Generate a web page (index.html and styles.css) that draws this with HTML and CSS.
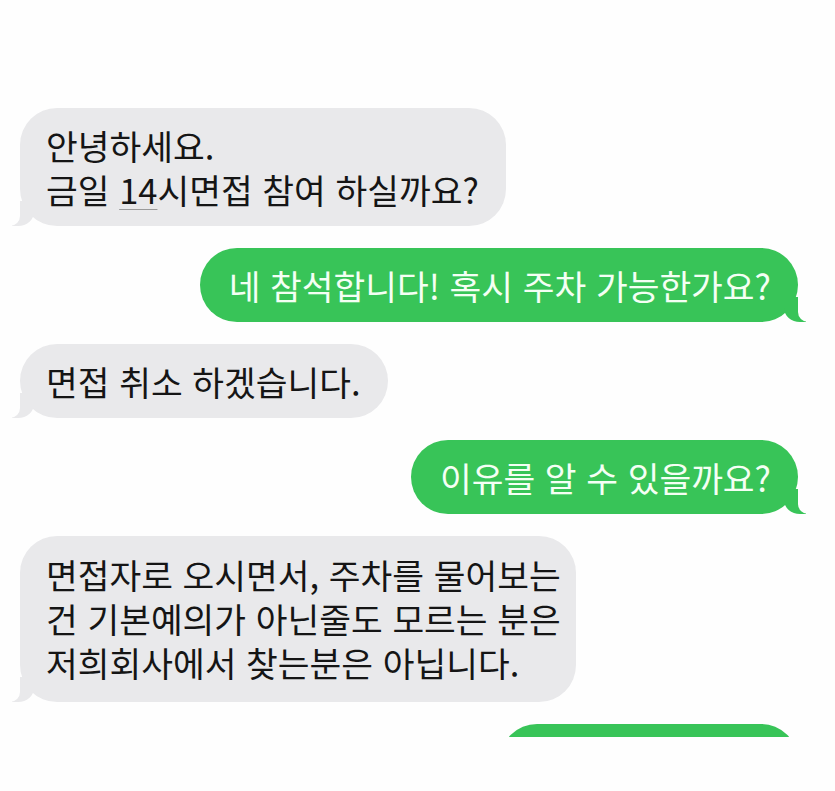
FILE: index.html
```html
<!DOCTYPE html>
<html lang="ko">
<head>
  <meta charset="UTF-8" />
  <meta name="viewport" content="width=device-width, initial-scale=1" />
  <title>메시지</title>
  <link rel="stylesheet" href="styles.css">
</head>
<body>
  <div class="thread">
    <div class="msg in">안녕하세요.<br/>금일 <span class="detect">14</span>시면접 참여 하실까요?</div>
    <div class="msg out">네 참석합니다! 혹시 주차 가능한가요?</div>
    <div class="msg in">면접 취소 하겠습니다.</div>
    <div class="msg out">이유를 알 수 있을까요?</div>
    <div class="msg in wide">면접자로 오시면서, 주차를 물어보는 건 기본예의가 아닌줄도 모르는 분은 저희회사에서 찾는분은 아닙니다.</div>
    <div class="msg out pending"></div>
  </div>
</body>
</html>
```

FILE: styles.css
```css
body {
  margin: 0;
  background: #fefefe;
  font-family: "Noto Sans CJK KR", "Noto Sans", sans-serif;
}
.thread {
  display: flex;
  flex-direction: column;
  gap: 22px;
  height: 629px;
  padding: 108px 37px 0 20px;
  overflow: hidden;
}
.msg {
  position: relative;
  max-width: 620px;
  padding: 15px 27px 15px 26px;
  border-radius: 37px;
  font-size: 34.5px;
  line-height: 44px;
  box-sizing: border-box;
}
.msg.in {
  align-self: flex-start;
  background: #e9e9eb;
  color: #151515;
}
.msg.out {
  align-self: flex-end;
  background: #38c458;
  color: #f4fff4;
}
.msg.out:not(.pending) {
  padding-left: 29px;
}
.msg.wide {
  max-width: 556px;
  padding: 16px 10px 18px 26px;
}
.msg.pending {
  width: 298px;
  height: 74px;
  flex-shrink: 0;
}
.detect {
  text-decoration: underline;
  text-decoration-color: #9a9a9a;
  text-decoration-thickness: 1px;
  text-underline-offset: 5px;
}

/* bubble tails */
.msg::before,
.msg::after {
  content: "";
  position: absolute;
  bottom: 0;
  height: 25px;
}
.msg.in::before {
  left: -8px;
  width: 22px;
  background: #e9e9eb;
  border-bottom-right-radius: 16px 14px;
}
.msg.in::after {
  left: -26px;
  width: 26px;
  background: #fefefe;
  border-bottom-right-radius: 10px;
}
.msg.out::before {
  right: -8px;
  width: 22px;
  background: #38c458;
  border-bottom-left-radius: 16px 14px;
}
.msg.out::after {
  right: -26px;
  width: 26px;
  background: #fefefe;
  border-bottom-left-radius: 10px;
}
```
